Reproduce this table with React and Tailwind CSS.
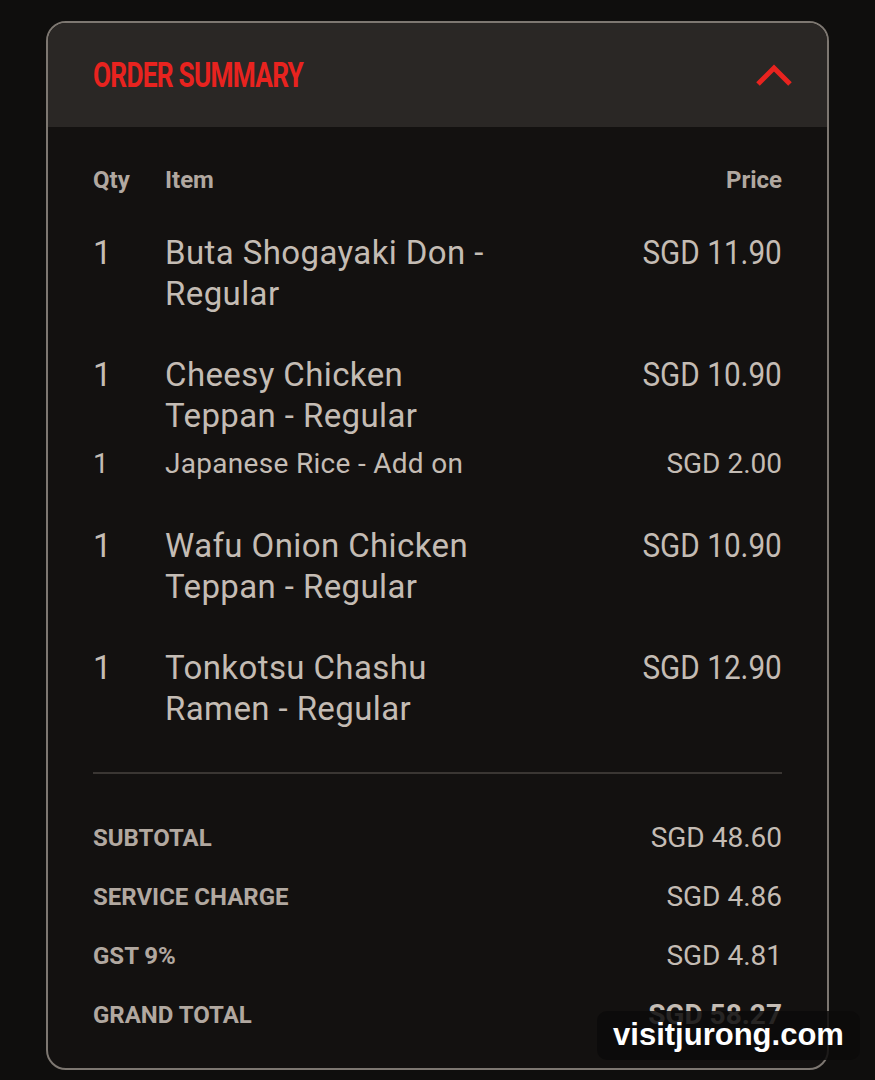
import React from "react";

const items = [
  { qty: "1", name: ["Buta Shogayaki Don -", "Regular"], price: "SGD 11.90" },
  {
    qty: "1",
    name: ["Cheesy Chicken", "Teppan - Regular"],
    price: "SGD 10.90",
    addon: { qty: "1", name: "Japanese Rice - Add on", price: "SGD 2.00" },
  },
  { qty: "1", name: ["Wafu Onion Chicken", "Teppan - Regular"], price: "SGD 10.90" },
  { qty: "1", name: ["Tonkotsu Chashu", "Ramen - Regular"], price: "SGD 12.90" },
];

const totals = [
  ["SUBTOTAL", "SGD 48.60"],
  ["SERVICE CHARGE", "SGD 4.86"],
  ["GST 9%", "SGD 4.81"],
  ["GRAND TOTAL", "SGD 58.27"],
];

export default function App() {
  return (
    <div
      className="relative min-h-[1080px] w-[875px] bg-[#0f0e0d] pt-[21px] px-[46px]"
      style={{ fontFamily: "Roboto, 'Liberation Sans', sans-serif" }}
    >
      <div className="rounded-[20px] border-2 border-[#7d7771] bg-[#131110] overflow-hidden">
        <div className="flex h-[104px] items-center justify-between bg-[#2a2725] pl-[45px] pr-[35px]">
          <div className="text-[35px] font-bold tracking-[-1px] text-[#e8231f] origin-left scale-x-[0.75] leading-none">
            ORDER SUMMARY
          </div>
          <svg width="36" height="22" viewBox="0 0 36 22" fill="none">
            <polyline points="2,20 18,4 34,20" stroke="#e8231f" strokeWidth="5" />
          </svg>
        </div>

        <div className="px-[45px] pt-[38px] pb-[38px]">
          <div className="flex text-[24px] font-bold leading-[30px] text-[#b1a8a0]">
            <div className="w-[72px]">Qty</div>
            <div className="flex-1">Item</div>
            <div>Price</div>
          </div>

          <div className="mt-[37px] flex flex-col gap-[40px]">
            {items.map((it, i) => (
              <div key={i} className={"flex flex-col " + (it.addon ? "mb-[5px]" : "")}>
                <div className="flex text-[33px] leading-[41px] text-[#c4bcb4]">
                  <div className="w-[72px]">{it.qty}</div>
                  <div className="flex-1 tracking-[0.4px]">
                    {it.name.map((l, j) => (
                      <div key={j}>{l}</div>
                    ))}
                  </div>
                  <div className="origin-right scale-x-[0.9]">{it.price}</div>
                </div>
                {it.addon && (
                  <div className="mt-[12px] flex text-[28px] leading-[32px] text-[#c4bcb4]">
                    <div className="w-[72px]">{it.addon.qty}</div>
                    <div className="flex-1 tracking-[0.3px]">{it.addon.name}</div>
                    <div>{it.addon.price}</div>
                  </div>
                )}
              </div>
            ))}
          </div>

          <div className="mt-[43px] h-[2px] bg-[#3a3633]" />

          <div className="mt-[49px] flex flex-col gap-[29px]">
            {totals.map(([l, v], i) => (
              <div key={i} className="flex items-center justify-between leading-[30px]">
                <div className="text-[24px] font-bold text-[#b1a8a0]">{l}</div>
                <div
                  className={
                    "text-[28px] text-[#c4bcb4] " + (i === 3 ? "font-bold" : "")
                  }
                >
                  {v}
                </div>
              </div>
            ))}
          </div>
        </div>
      </div>

      <div
        className="absolute left-[597px] top-[1011px] flex h-[49px] w-[263px] items-center justify-center rounded-[10px] bg-[#0c0b0b]/85 text-[31px] font-bold text-white"
        style={{ fontFamily: "'Liberation Sans', Arial, sans-serif" }}
      >
        visitjurong.com
      </div>
    </div>
  );
}
